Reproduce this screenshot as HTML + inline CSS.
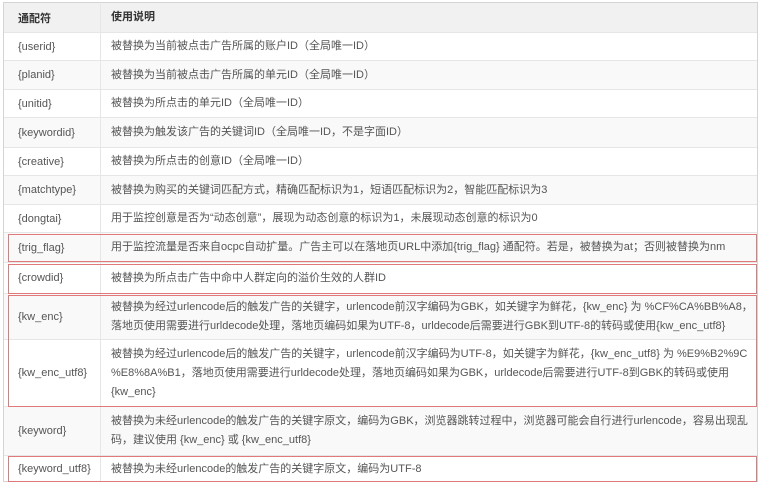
<!DOCTYPE html>
<html><head><meta charset="utf-8"><style>
body{margin:0;width:763px;height:488px;background:#fff;position:relative;overflow:hidden;font-family:"Liberation Sans","Noto Sans CJK SC",sans-serif;font-size:11px;color:#555;}
.frame{position:absolute;left:3px;top:2px;width:755px;height:480px;border:1px solid #d4d4d4;box-sizing:border-box;}
.r{position:absolute;left:4px;width:753px;border-bottom:1px solid #e6e6e6;box-sizing:border-box;}
.r.g{background:#f9f9f9}
.r.h{background:#f1f1f1;font-weight:bold;color:#333}
.c1{position:absolute;left:14px;top:0;bottom:0;display:flex;align-items:center;}
.c2{position:absolute;left:107px;right:0;top:0;bottom:0;display:flex;align-items:center;line-height:19px;white-space:nowrap;}
.v{position:absolute;left:100px;top:4px;height:478px;width:1px;background:#e6e6e6}
.red{position:absolute;left:8px;width:749px;border:1px solid #e07a7a;box-sizing:border-box;}
</style></head><body>
<div class="frame"></div>
<div class="r h" style="top:3px;height:30px"><div class="c1">通配符</div><div class="c2">使用说明</div></div>
<div class="r" style="top:33px;height:28px"><div class="c1">{userid}</div><div class="c2">被替换为当前被点击广告所属的账户ID（全局唯一ID）</div></div>
<div class="r g" style="top:61px;height:29px"><div class="c1">{planid}</div><div class="c2">被替换为当前被点击广告所属的单元ID（全局唯一ID）</div></div>
<div class="r" style="top:90px;height:28px"><div class="c1">{unitid}</div><div class="c2">被替换为所点击的单元ID（全局唯一ID）</div></div>
<div class="r g" style="top:118px;height:30px"><div class="c1">{keywordid}</div><div class="c2">被替换为触发该广告的关键词ID（全局唯一ID，不是字面ID）</div></div>
<div class="r" style="top:148px;height:28px"><div class="c1">{creative}</div><div class="c2">被替换为所点击的创意ID（全局唯一ID）</div></div>
<div class="r g" style="top:176px;height:29px"><div class="c1">{matchtype}</div><div class="c2">被替换为购买的关键词匹配方式，精确匹配标识为1，短语匹配标识为2，智能匹配标识为3</div></div>
<div class="r" style="top:205px;height:28px"><div class="c1">{dongtai}</div><div class="c2">用于监控创意是否为“动态创意”，展现为动态创意的标识为1，未展现动态创意的标识为0</div></div>
<div class="r g" style="top:233px;height:30px"><div class="c1">{trig_flag}</div><div class="c2">用于监控流量是否来自ocpc自动扩量。广告主可以在落地页URL中添加{trig_flag} 通配符。若是，被替换为at；否则被替换为nm</div></div>
<div class="r" style="top:263px;height:31px"><div class="c1">{crowdid}</div><div class="c2">被替换为所点击广告中命中人群定向的溢价生效的人群ID</div></div>
<div class="r g" style="top:294px;height:46px"><div class="c1">{kw_enc}</div><div class="c2">被替换为经过urlencode后的触发广告的关键字，urlencode前汉字编码为GBK，如关键字为鲜花，{kw_enc} 为 %CF%CA%BB%A8，<br>落地页使用需要进行urldecode处理，落地页编码如果为UTF-8，urldecode后需要进行GBK到UTF-8的转码或使用{kw_enc_utf8}</div></div>
<div class="r" style="top:340px;height:67px"><div class="c1">{kw_enc_utf8}</div><div class="c2">被替换为经过urlencode后的触发广告的关键字，urlencode前汉字编码为UTF-8，如关键字为鲜花，{kw_enc_utf8} 为 %E9%B2%9C<br>%E8%8A%B1，落地页使用需要进行urldecode处理，落地页编码如果为GBK，urldecode后需要进行UTF-8到GBK的转码或使用<br>{kw_enc}</div></div>
<div class="r g" style="top:407px;height:49px"><div class="c1">{keyword}</div><div class="c2">被替换为未经urlencode的触发广告的关键字原文，编码为GBK，浏览器跳转过程中，浏览器可能会自行进行urlencode，容易出现乱<br>码，建议使用 {kw_enc} 或 {kw_enc_utf8}</div></div>
<div class="r" style="top:456px;height:26px;border-bottom:none"><div class="c1">{keyword_utf8}</div><div class="c2">被替换为未经urlencode的触发广告的关键字原文，编码为UTF-8</div></div>
<div class="v"></div>
<div class="red" style="top:234px;height:28px"></div>
<div class="red" style="top:264px;height:30px"></div>
<div class="red" style="top:295px;height:112px"></div>
<div class="red" style="top:456px;height:26px"></div>
</body></html>
